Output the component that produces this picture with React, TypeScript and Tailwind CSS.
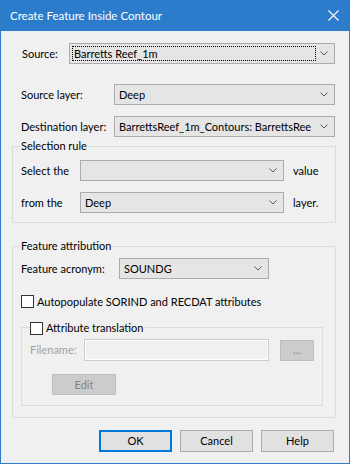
import React from "react";

function Chevron() {
  return (
    <svg width="8" height="5" viewBox="0 0 8 5" className="shrink-0">
      <path d="M0.5 0.5 L4 4 L7.5 0.5" fill="none" stroke="#5a5a5a" strokeWidth="1" />
    </svg>
  );
}

function Combo({ value, width, focus }: { value?: string; width: string; focus?: boolean }) {
  return (
    <div className={`h-[21px] ${width} shrink-0 border border-[#acacac] bg-[#e5e5e5] flex items-center pr-[6px]`}>
      {focus ? (
        <div className="ml-[2px] mr-[4px] h-[15px] flex-1 border border-dotted border-black flex items-center pl-[1px]">
          {value}
        </div>
      ) : (
        <div className="flex-1 pl-[4px] whitespace-nowrap overflow-hidden">{value}</div>
      )}
      <Chevron />
    </div>
  );
}

function Checkbox() {
  return <div className="w-[13px] h-[13px] shrink-0 border border-[#333333] bg-white" />;
}

function Button({ label, primary }: { label: string; primary?: boolean }) {
  return (
    <div
      className={`w-[73px] h-[22px] flex items-center justify-center bg-[#e1e1e1] ${
        primary ? "border-2 border-[#0078d7]" : "border border-[#adadad]"
      }`}
    >
      {label}
    </div>
  );
}

export default function App() {
  return (
    <div className="w-[350px] h-[464px] flex flex-col font-['Lato',sans-serif] text-[11px] leading-[14px] text-black">
      {/* Title bar */}
      <div className="h-[31px] shrink-0 bg-[#2b7ccb] flex items-center pl-[10px] pr-[11px] text-white">
        <span className="flex-1 text-[11.5px]">Create Feature Inside Contour</span>
        <svg width="11" height="11" viewBox="0 0 11 11">
          <path d="M0.5 0.5 L10.5 10.5 M10.5 0.5 L0.5 10.5" stroke="white" strokeWidth="1.1" />
        </svg>
      </div>

      <div className="flex-1 flex flex-col bg-[#f0f0f0] border-x border-b border-[#2b7ccb] pl-[11px] pr-[12px]">
        {/* Source */}
        <div className="mt-[12px] flex items-center pl-[10px]">
          <span className="w-[47px]">Source:</span>
          <Combo value="Barretts Reef_1m" width="w-[266px]" focus />
        </div>

        <div className="mt-[20px] flex items-center pl-[9px]">
          <span className="w-[93px]">Source layer:</span>
          <Combo value="Deep" width="w-[221px]" />
        </div>

        <div className="mt-[11px] flex items-center pl-[9px]">
          <span className="w-[93px]">Destination layer:</span>
          <Combo value="BarrettsReef_1m_Contours: BarrettsRee" width="w-[221px]" />
        </div>

        {/* Selection rule */}
        <div className="mt-[9px] w-[324px] relative border border-[#dcdcdc] pl-[8px] pb-[9px]">
          <span className="absolute top-[-8px] left-[7px] px-[1px] bg-[#f0f0f0]">Selection rule</span>
          <div className="mt-[13px] flex items-center">
            <span className="w-[59px]">Select the</span>
            <Combo width="w-[204px]" />
            <span className="ml-[9px]">value</span>
          </div>
          <div className="mt-[11px] flex items-center">
            <span className="w-[59px]">from the</span>
            <Combo value="Deep" width="w-[204px]" />
            <span className="ml-[9px]">layer.</span>
          </div>
        </div>

        {/* Feature attribution */}
        <div className="mt-[23px] w-[324px] relative border border-[#dcdcdc] pl-[8px] pb-[11px]">
          <span className="absolute top-[-8px] left-[7px] px-[1px] bg-[#f0f0f0]">Feature attribution</span>
          <div className="mt-[11px] flex items-center">
            <span className="w-[98px]">Feature acronym:</span>
            <Combo value="SOUNDG" width="w-[150px]" />
          </div>
          <div className="mt-[16px] h-[13px] flex items-center gap-[3px]">
            <Checkbox />
            <span className="whitespace-nowrap">Autopopulate SORIND and RECDAT attributes</span>
          </div>

          {/* Attribute translation */}
          <div className="mt-[19px] w-[302px] relative border border-[#dcdcdc] pl-[8px] pb-[10px]">
            <div className="absolute top-[-7px] left-[8px] pr-[2px] bg-[#f0f0f0] flex items-center gap-[3px]">
              <Checkbox />
              <span>Attribute translation</span>
            </div>
            <div className="mt-[11px] flex items-center">
              <span className="w-[54px] text-[#a0a0a0]">Filename:</span>
              <div className="w-[185px] h-[22px] border border-[#cccccc] bg-[#f0f0f0] shadow-[inset_0_0_0_1px_#ffffff]" />
              <div className="ml-[11px] w-[34px] h-[21px] border border-[#bfbfbf] bg-[#cccccc] flex items-center justify-center text-[#838383]">
                ...
              </div>
            </div>
            <div className="mt-[13px] ml-[22px] w-[64px] h-[21px] border border-[#bfbfbf] bg-[#cccccc] flex items-center justify-center text-[#838383]">
              Edit
            </div>
          </div>
        </div>

        {/* Buttons */}
        <div className="mt-[12px] flex justify-end gap-[8px] pr-[3px]">
          <Button label="OK" primary />
          <Button label="Cancel" />
          <Button label="Help" />
        </div>
      </div>
    </div>
  );
}
